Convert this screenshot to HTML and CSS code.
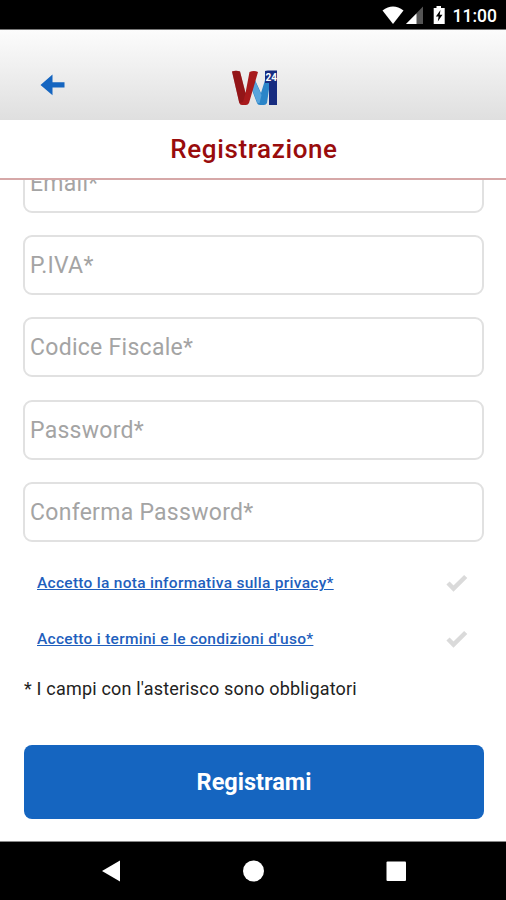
FILE: index.html
```html
<!DOCTYPE html>
<html lang="it">
<head>
<meta charset="utf-8">
<title>Registrazione</title>
<link rel="stylesheet" href="styles.css">
</head>
<body>
<div class="screen">
  <div class="status">
    <svg class="status-icons" width="68" height="29" viewBox="0 0 68 29">
      <path fill="#fff" d="M1.500 10.500Q12 2.500 22.500 10.500L12 24Z"/>
      <path fill="#555" d="M42 6.500V24H25Z"/>
      <path fill="#fff" d="M35.500 13.500V24H25Z"/>
      <path fill="#fff" d="M52.700 8H55.500V6H60V8H63.700V24H52.700Z"/>
      <path fill="#000" d="M59.500 10L54.900 16.500H57.600L56.800 21.500L61.500 14.800H58.700Z"/>
    </svg>
    <span class="clock">11:00</span>
  </div>
  <header class="header">
    <svg class="back" width="26" height="22" viewBox="0 0 26 22">
      <path fill="#1565c0" d="M0.500 11L12.500 0.500V8.300H24.500V13.500H12.500V21.300Z"/>
    </svg>
    <svg class="logo" width="46" height="36" viewBox="0 0 46 36">
      <path fill="#2b85c8" d="M23 10L29 23L33 10Q35 11 38 12L35 33Q34 35 32 35H28Q25.500 35 25 33L20 20Z"/>
      <path fill="#58a4dc" d="M23 11L29.500 25L27.500 33L25.500 33L20.500 20Z"/>
      <path fill="#a81a1c" d="M0 1.500Q4 0 8 1.500L13.500 23L17.500 2Q22 0 26 2L17 33Q16 35 14 35H10Q7.800 35 7.300 33Z"/>
      <path fill="#7e1014" d="M0 1.500Q4 0 8 1.500L13.500 23L11 32L7.300 33Z" opacity="0.500"/>
      <path fill="#172c80" d="M33 1Q34 0.500 36 0.500H45V35H37V13H33Z"/>
      <text class="logo-number" x="33.500" y="10.500">24</text>
    </svg>
  </header>
  <h1 class="title">Registrazione</h1>
  <main class="content">
    <form class="form">
      <div class="field">Email*</div>
      <div class="field">P.IVA*</div>
      <div class="field">Codice Fiscale*</div>
      <div class="field">Password*</div>
      <div class="field">Conferma Password*</div>
      <div class="consent">
        <a class="link">Accetto la nota informativa sulla privacy*</a>
        <svg class="check" width="22" height="18" viewBox="0 0 22 18"><path d="M2 9L7.500 14.500L19.700 2.500"/></svg>
      </div>
      <div class="consent">
        <a class="link">Accetto i termini e le condizioni d'uso*</a>
        <svg class="check" width="22" height="18" viewBox="0 0 22 18"><path d="M2 9L7.500 14.500L19.700 2.500"/></svg>
      </div>
      <p class="note">* I campi con l'asterisco sono obbligatori</p>
      <div class="submit">Registrami</div>
    </form>
  </main>
  <nav class="navbar">
    <svg width="506" height="58" viewBox="0 0 506 58">
      <path fill="#fff" d="M102 29L120 18.500V39.500Z"/>
      <circle fill="#fff" cx="253.500" cy="29" r="10.500"/>
      <rect fill="#fff" x="386.500" y="19.500" width="19.500" height="19.500" rx="1"/>
    </svg>
  </nav>
</div>
</body>
</html>
```
FILE: styles.css
```css
* { box-sizing: border-box; }
body { margin: 0; font-family: Roboto, sans-serif; background: #fff; }
.screen { width: 506px; height: 900px; display: flex; flex-direction: column; overflow: hidden; }
.status { height: 30px; flex: none; display: flex; justify-content: flex-end; background: #000; border-bottom: 1px solid #777; padding-right: 9px; }
.status-icons { margin-right: 3px; }
.clock { color: #fff; font-size: 17.500px; font-weight: 500; line-height: 32px; width: 45px; text-align: right; white-space: nowrap; }
.header { height: 90px; flex: none; display: grid; grid-template-columns: 192px 1fr; align-items: start; background: linear-gradient(#fcfcfc, #dfdfdf); padding: 40px 0 0 39.500px; }
.back { margin-top: 4px; }
.logo-number { fill: #fff; font-size: 10px; font-weight: 700; }
.title { height: 60px; flex: none; margin: 0; background: #fff; border-bottom: 2px solid #d6a8a8; color: #990c0c; font-size: 26px; font-weight: 500; line-height: 58px; letter-spacing: 0.620px; text-align: center; padding-left: 2px; }
.content { height: 661px; flex: none; overflow: hidden; padding: 0 22px 0 23px; }
.form { margin-top: -27.500px; display: flex; flex-direction: column; }
.field { height: 60px; flex: none; margin-bottom: 22.400px; border: 2px solid #e1e1e1; border-radius: 9px; padding-left: 5px; color: #a4a4a4; font-size: 23px; line-height: 57px; letter-spacing: 0.280px; }
.consent { height: 55.500px; display: flex; align-items: center; justify-content: space-between; padding: 0 16px 0 14px; }
.field + .consent { margin-top: -9px; }
.link { color: #1f5fbd; font-size: 15.500px; font-weight: 500; text-decoration: underline; letter-spacing: 0.280px; white-space: nowrap; }
.check { fill: none; stroke: #dadada; stroke-width: 4.500; }
.note { margin: 11px 0 0 1px; font-size: 18px; line-height: 24px; color: #222; letter-spacing: 0.190px; white-space: nowrap; }
.submit { height: 73.500px; margin: 44px 0 0 1px; border-radius: 8px; background: #1565c0; color: #fff; font-size: 23.500px; font-weight: 700; line-height: 74px; text-align: center; }
.navbar { height: 59px; flex: none; background: #000; border-top: 1px solid #888; }
.navbar svg { display: block; }
```
